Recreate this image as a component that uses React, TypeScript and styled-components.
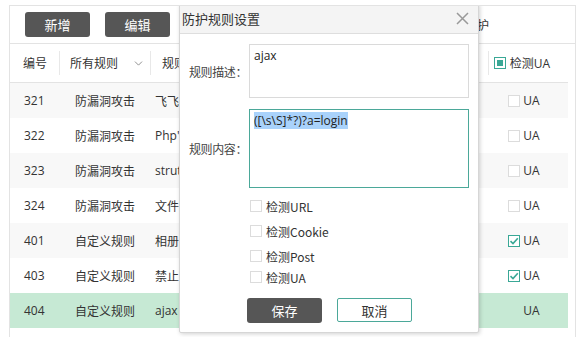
import styled, { createGlobalStyle } from 'styled-components';
import { ChevronDown } from 'lucide-react';

const GlobalStyle = createGlobalStyle`
    body {
        margin: 0;
        background: #fff;
        font-family: "Open Sans", "Noto Sans CJK SC", sans-serif;
        color: #333;
    }
`;

const Panel = styled.div`
    position: relative;
    margin: 5px 0 0 9px;
    width: 565px;
    height: 340px;
    border: 1px solid #e3e3e3;
    border-bottom: none;
    background: #fff;
    overflow: hidden;
`;

const Toolbar = styled.div`
    height: 37px;
    display: flex;
    align-items: center;
    gap: 15px;
    padding-left: 15px;
    border-bottom: 1px solid #e3e3e3;
`;

const DarkButton = styled.button`
    width: ${props => props.$w || 65}px;
    height: 25px;
    border: none;
    border-radius: 3px;
    background: #565656;
    color: #fff;
    font-family: "Noto Sans CJK SC", sans-serif;
    font-size: 13px;
    padding: 0;
`;

const ToolbarNote = styled.span`
    margin-left: auto;
    margin-right: 86px;
    font-size: 12px;
    font-family: "Noto Sans CJK SC", sans-serif;
`;

const Table = styled.div`
    width: 558px;
`;

const Row = styled.div`
    display: grid;
    grid-template-columns: 49px 91px 1fr 80px;
    height: ${props => props.$head ? 38 : 35}px;
    align-items: center;
    font-size: 12px;
    background: ${props => props.$selected ? '#c6e9d4' : props.$striped ? '#f8f8f8' : '#fff'};
    border-bottom: ${props => props.$head ? '1px solid #e3e3e3' : 'none'};
`;

const Cell = styled.div`
    display: flex;
    align-items: center;
    height: 100%;
    padding-left: ${props => props.$pad || 0}px;
    padding-right: ${props => props.$center ? 8 : 0}px;
    justify-content: ${props => props.$center ? 'center' : 'flex-start'};
    white-space: nowrap;
    overflow: hidden;
    font-family: "Open Sans", "Noto Sans CJK SC", sans-serif;
`;

const HeadCell = styled(Cell)`
    position: relative;
    padding-right: ${props => props.$center ? 12 : 0}px;
    &::before {
        content: '';
        display: ${props => props.$divider ? 'block' : 'none'};
        position: absolute;
        left: 0;
        top: 7px;
        height: 24px;
        border-left: 1px solid #e8e8e8;
    }
`;

const Chevron = styled.span`
    display: flex;
    margin-left: 14px;
    color: #777;
`;

const Box = styled.span`
    width: 12px;
    height: 12px;
    box-sizing: border-box;
    border: 1px solid ${props => props.$on ? '#3aa896' : '#dcdcdc'};
    background: #fff;
    display: inline-flex;
    align-items: center;
    justify-content: center;
    margin-right: ${props => props.$gap || 3}px;
    flex: none;
    visibility: ${props => props.$hidden ? 'hidden' : 'visible'};
`;

const Dot = styled.span`
    width: 6px;
    height: 6px;
    background: #3aa896;
`;

const Check = () => (
    <svg width="10" height="10" viewBox="0 0 10 10">
        <path d="M1.5 5.2 L4 7.6 L8.8 2.2" fill="none" stroke="#3aa896" strokeWidth="1.6" />
    </svg>
);

const Dialog = styled.div`
    position: absolute;
    left: 169px;
    top: -3px;
    width: 300px;
    height: 330px;
    box-sizing: border-box;
    background: #fff;
    border: 1px solid #d6d6d6;
    border-radius: 2px;
    box-shadow: 1px 1px 4px rgba(0, 0, 0, 0.18);
    font-family: "Noto Sans CJK SC", sans-serif;
`;

const DialogTitle = styled.div`
    height: 29px;
    display: flex;
    align-items: center;
    justify-content: space-between;
    padding: 0 9px 0 2px;
    background: #f4f4f4;
    border-bottom: 1px solid #dedede;
    font-size: 13px;
    color: #333;
`;

const Close = () => (
    <svg width="13" height="13" viewBox="0 0 13 13">
        <path d="M1 1 L12 12 M12 1 L1 12" stroke="#999" strokeWidth="1.5" />
    </svg>
);

const Body = styled.div`
    padding: 10px 10px 0 9px;
`;

const FormRow = styled.div`
    display: flex;
    align-items: center;
    margin-bottom: ${props => props.$mb || 0}px;
`;

const Label = styled.span`
    flex: none;
    width: 60px;
    font-size: 12px;
    letter-spacing: -0.4px;
    color: #444;
    white-space: nowrap;
`;

const TextBox = styled.div`
    flex: none;
    width: 220px;
    height: ${props => props.$h}px;
    box-sizing: border-box;
    border: 1px solid ${props => props.$focus ? '#4ba899' : '#dadada'};
    padding: 2px 4px;
    font-family: "Open Sans", "Noto Sans CJK SC", sans-serif;
    font-size: 12px;
    line-height: 18px;
    color: #222;
`;

const Selected = styled.span`
    background: #a9d2fb;
`;

const Options = styled.div`
    display: flex;
    flex-direction: column;
    padding-left: 61px;
    margin-top: 8px;
`;

const Option = styled.label`
    display: flex;
    align-items: center;
    height: 20px;
    margin-bottom: ${props => props.$mb}px;
    font-size: 12px;
    color: #333;
`;

const Actions = styled.div`
    display: flex;
    gap: 15px;
    padding-left: 58px;
    margin-top: 11px;
`;

const LightButton = styled.button`
    width: 75px;
    height: 24px;
    border: 1px solid #4ba899;
    border-radius: 2px;
    background: #fff;
    color: #333;
    font-family: "Noto Sans CJK SC", sans-serif;
    font-size: 13px;
    padding: 0;
`;

// names are mostly hidden behind the dialog
const rules = [
    { id: 321, type: '防漏洞攻击', name: '飞飞', ua: false },
    { id: 322, type: '防漏洞攻击', name: "Php'", ua: false },
    { id: 323, type: '防漏洞攻击', name: 'struts', ua: false },
    { id: 324, type: '防漏洞攻击', name: '文件', ua: false },
    { id: 401, type: '自定义规则', name: '相册', ua: true },
    { id: 403, type: '自定义规则', name: '禁止', ua: true },
    { id: 404, type: '自定义规则', name: 'ajax', ua: false, selected: true },
];

const options = [
    { text: '检测URL', mb: 5 },
    { text: '检测Cookie', mb: 5 },
    { text: '检测Post', mb: 1 },
    { text: '检测UA', mb: 0 },
];

const App = () => {
    return (<>
        <GlobalStyle />
        <Panel>
            <Toolbar>
                <DarkButton>新增</DarkButton>
                <DarkButton>编辑</DarkButton>
                <ToolbarNote>防护</ToolbarNote>
            </Toolbar>
            <Table>
                <Row $head>
                    <HeadCell $pad={13}>编号</HeadCell>
                    <HeadCell $pad={11} $divider>
                        所有规则
                        <Chevron><ChevronDown size={13} strokeWidth={1.5} /></Chevron>
                    </HeadCell>
                    <HeadCell $pad={12} $divider>规则</HeadCell>
                    <HeadCell $center $divider>
                        <Box $on $gap={4}><Dot /></Box>检测UA
                    </HeadCell>
                </Row>
                {rules.map((rule, i) =>
                    <Row key={rule.id} $striped={i % 2 === 0} $selected={rule.selected}>
                        <Cell $pad={14}>{rule.id}</Cell>
                        <Cell $pad={16}>{rule.type}</Cell>
                        <Cell $pad={5}>{rule.name}</Cell>
                        <Cell $center>
                            <Box $on={rule.ua} $hidden={rule.selected}>{rule.ua && <Check />}</Box>
                            UA
                        </Cell>
                    </Row>)}
            </Table>
            <Dialog>
                <DialogTitle>
                    防护规则设置
                    <Close />
                </DialogTitle>
                <Body>
                    <FormRow $mb={11}>
                        <Label>规则描述：</Label>
                        <TextBox $h={54}>ajax</TextBox>
                    </FormRow>
                    <FormRow>
                        <Label>规则内容：</Label>
                        <TextBox $h={79} $focus><Selected>([\s\S]*?)?a=login</Selected></TextBox>
                    </FormRow>
                    <Options>
                        {options.map(o =>
                            <Option key={o.text} $mb={o.mb}>
                                <Box $gap={4} />{o.text}
                            </Option>)}
                    </Options>
                    <Actions>
                        <DarkButton $w={75}>保存</DarkButton>
                        <LightButton>取消</LightButton>
                    </Actions>
                </Body>
            </Dialog>
        </Panel>
    </>);
}

export default App;
